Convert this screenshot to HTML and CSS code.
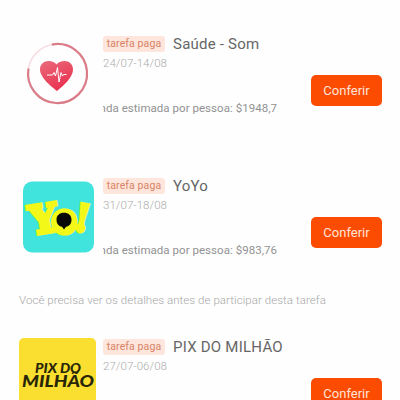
FILE: index.html
```html
<!DOCTYPE html>
<html lang="pt-BR">
<head>
<meta charset="utf-8">
<title>Tarefas</title>
<link rel="stylesheet" href="styles.css">
</head>
<body>
<main class="tasks">
  <article class="task">
    <svg class="icon" viewBox="0 0 77 77">
      <defs>
        <linearGradient id="heart" x1="0" y1="0" x2="0.5" y2="1"><stop offset="0" stop-color="#ea6c7c"/><stop offset="1" stop-color="#e93250"/></linearGradient>
      </defs>
      <circle cx="38.500" cy="38.500" r="29.500" fill="none" stroke="#f9dde2" stroke-width="1.600"/>
      <path d="M32.800 9.600A29.500 29.500 0 1 1 9.500 33.500" fill="none" stroke="#db7c89" stroke-width="2.200"/>
      <path d="M38 56C35 53.500 21 43.500 21 34.500C21 29 25 26 29.500 26C33 26 36 27.500 37.500 29.500C39 27.500 42 26 45.500 26C50 26 54 29 54 34.500C54 43.500 41 53.500 38 56Z" fill="url(#heart)"/>
      <path d="M28 40H33.500L35 37.500L36.500 41L38.500 32.500L40 47L42 37.500L43.500 41L44.500 39.500H47.500" fill="none" stroke="#fff" stroke-width="1" stroke-linejoin="round"/>
    </svg>
    <div class="info">
      <div class="head"><span class="tag">tarefa paga</span><h2 class="name">Saúde - Som</h2></div>
      <div class="dates">24/07-14/08</div>
      <div class="reward"><span>Renda estimada por pessoa: $1948,7</span></div>
    </div>
    <button class="check">Conferir</button>
  </article>

  <article class="task task-noted">
    <svg class="icon" viewBox="0 0 77 77">
      <rect x="4" y="4.500" width="71" height="71" rx="9" fill="#40e4dc"/>
      <g class="yo">
        <text x="10.500" y="56" font-size="39" textLength="28" lengthAdjust="spacingAndGlyphs" transform="rotate(-9 22 42)">Y</text>
        <text x="56" y="54" font-size="37" textLength="15" lengthAdjust="spacingAndGlyphs" transform="rotate(11 63 40)">!</text>
        <text x="33" y="56" font-size="42" textLength="25" lengthAdjust="spacingAndGlyphs">o</text>
      </g>
      <circle cx="45" cy="44.500" r="13" fill="#f4f819"/>
      <path d="M45 35.800C49.500 35.800 52.500 38.500 52.500 42.700C52.500 46.500 50.500 49 47 49.700L45 52.500L43 49.700C39.500 49 37.500 46.500 37.500 42.700C37.500 38.500 40.500 35.800 45 35.800Z" fill="#080808"/>
    </svg>
    <div class="info">
      <div class="head"><span class="tag">tarefa paga</span><h2 class="name">YoYo</h2></div>
      <div class="dates">31/07-18/08</div>
      <div class="reward"><span>Renda estimada por pessoa: $983,76</span></div>
    </div>
    <button class="check">Conferir</button>
  </article>
  <p class="note">Você precisa ver os detalhes antes de participar desta tarefa</p>

  <article class="task task-last">
    <svg class="icon" viewBox="0 0 77 77">
      <rect width="77" height="77" rx="5" fill="#fade30"/>
      <g class="pix">
        <text x="16" y="34.500" font-size="13.500" textLength="46" lengthAdjust="spacingAndGlyphs">PIX DO</text>
        <text x="3" y="49" font-size="17.500" textLength="72" lengthAdjust="spacingAndGlyphs">MILHÃO</text>
      </g>
    </svg>
    <div class="info">
      <div class="head"><span class="tag">tarefa paga</span><h2 class="name name-wide">PIX DO MILHÃO</h2></div>
      <div class="dates">27/07-06/08</div>
    </div>
    <button class="check">Conferir</button>
  </article>
</main>
</body>
</html>
```
FILE: styles.css
```css
html, body { height: 100%; }
body { margin: 0; overflow: hidden; background: #fefefe; font-family: Roboto, sans-serif; }
.tasks { box-sizing: border-box; height: 400px; overflow: hidden; padding: 35px 18px 0 19px; }
.task { display: grid; grid-template-columns: 77px 174px 71px; column-gap: 7px; justify-content: start; height: 142px; }
.task .check { margin-left: 27px; }
.task-noted { height: 116px; }
.task-last { height: 62px; }
.icon { width: 77px; height: 77px; display: block; }
.info { padding-top: 1px; white-space: nowrap; }
.head { display: flex; align-items: center; height: 16px; gap: 8px; }
.tag { width: 62px; height: 16px; box-sizing: border-box; flex: none; border-radius: 3px; background: #fee6dc; color: #d98266; font-size: 10.5px; line-height: 16px; text-align: center; letter-spacing: 0.1px; }
.name { margin: 0; font-size: 15px; font-weight: 400; line-height: 17px; color: #666; letter-spacing: 0.22px; }
.name-wide { letter-spacing: 0.24px; }
.dates { margin-top: 4px; font-size: 11.5px; line-height: 15px; color: #acacac; letter-spacing: 0.05px; font-weight: 300; }
.reward { display: flex; justify-content: flex-end; overflow: hidden; margin-top: 30px; font-size: 11.5px; line-height: 15px; color: #929292; letter-spacing: 0.04px; }
.check { width: 71px; height: 31px; margin-top: 40px; padding: 0; border: 0; border-radius: 5px; background: #fc4c02; color: #ffe4d8; font: 400 13px/31px Roboto, sans-serif; }
.note { margin: 0; height: 45px; font-size: 11.5px; line-height: 14px; color: #a8a8a8; font-weight: 300; letter-spacing: 0.06px; white-space: nowrap; }
.yo { font-family: "DejaVu Serif", serif; font-weight: 700; fill: #f4f819; stroke: #f4f819; stroke-width: 4; }
.pix { font-family: Lato, sans-serif; font-weight: 900; font-style: italic; fill: #292607; }
```
